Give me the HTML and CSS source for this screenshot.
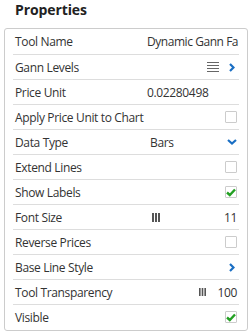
FILE: index.html
```html
<!DOCTYPE html>
<html lang="en">
<head>
    <meta charset="UTF-8">
    <meta name="viewport" content="width=device-width, initial-scale=1.0">
    <title>Properties</title>
    <link rel="stylesheet" href="styles.css">
</head>
<body>

<h1 class="title">Properties</h1>

<div class="panel">
    <!-- Tool Name -->
    <div class="row first">
        <span class="name">Tool Name</span>
        <span class="value long">Dynamic Gann Fa</span>
    </div>

    <div class="row">
        <span class="name">Gann Levels</span>
        <span class="value end">
            <svg class="list-icon" width="12" height="10" viewBox="0 0 12 10">
                <rect x="0" y="0" width="12" height="1" fill="#666"/>
                <rect x="0" y="3" width="12" height="1" fill="#666"/>
                <rect x="0" y="6" width="12" height="1" fill="#666"/>
                <rect x="0" y="9" width="12" height="1" fill="#666"/>
            </svg>
            <svg class="chev-right" width="6" height="9" viewBox="0 0 6 9">
                <path d="M1 1 L4.5 4.5 L1 8" fill="none" stroke="#1a6fc4" stroke-width="2.2"/>
            </svg>
        </span>
    </div>

    <div class="row">
        <span class="name">Price Unit</span>
        <span class="value">0.02280498</span>
    </div>

    <div class="row">
        <span class="name">Apply Price Unit to Chart</span>
        <span class="value end"><span class="check"></span></span>
    </div>

    <div class="row">
        <span class="name">Data Type</span>
        <span class="value split">
            <span class="select-text">Bars</span>
            <svg class="chev-down" width="10" height="6" viewBox="0 0 10 6">
                <path d="M1 1 L5 4.5 L9 1" fill="none" stroke="#1a6fc4" stroke-width="2.2"/>
            </svg>
        </span>
    </div>

    <div class="row">
        <span class="name">Extend Lines</span>
        <span class="value end"><span class="check"></span></span>
    </div>

    <div class="row">
        <span class="name">Show Labels</span>
        <span class="value end">
            <span class="check">
                <svg width="10" height="9" viewBox="0 0 10 9">
                    <path d="M1 4.5 L3.8 7 L9 1.5" fill="none" stroke="#23a023" stroke-width="2.4"/>
                </svg>
            </span>
        </span>
    </div>

    <div class="row">
        <span class="name">Font Size</span>
        <span class="value split">
            <svg class="bars-icon wide" width="8" height="9" viewBox="0 0 8 9">
                <rect x="0" y="0" width="2" height="9" fill="#555"/>
                <rect x="3" y="0" width="2" height="9" fill="#555"/>
                <rect x="6" y="0" width="2" height="9" fill="#555"/>
            </svg>
            <span class="num">11</span>
        </span>
    </div>

    <div class="row">
        <span class="name">Reverse Prices</span>
        <span class="value end"><span class="check"></span></span>
    </div>

    <div class="row">
        <span class="name">Base Line Style</span>
        <span class="value end">
            <svg class="chev-right" width="6" height="9" viewBox="0 0 6 9">
                <path d="M1 1 L4.5 4.5 L1 8" fill="none" stroke="#1a6fc4" stroke-width="2.2"/>
            </svg>
        </span>
    </div>

    <div class="row">
        <span class="name">Tool Transparency</span>
        <span class="value end">
            <svg class="bars-icon" width="7" height="8" viewBox="0 0 7 8">
                <rect x="0" y="0" width="1.6" height="8" fill="#555"/>
                <rect x="2.7" y="0" width="1.6" height="8" fill="#555"/>
                <rect x="5.4" y="0" width="1.6" height="8" fill="#555"/>
            </svg>
            <span class="num gap">100</span>
        </span>
    </div>

    <div class="row last">
        <span class="name">Visible</span>
        <span class="value end">
            <span class="check">
                <svg width="10" height="9" viewBox="0 0 10 9">
                    <path d="M1 4.5 L3.8 7 L9 1.5" fill="none" stroke="#23a023" stroke-width="2.4"/>
                </svg>
            </span>
        </span>
    </div>
</div>

</body>
</html>
```

FILE: styles.css
```css
body {
    margin: 0;
    font-family: "Open Sans", Arial, sans-serif;
    color: #333;
    background: #fff;
}
.title {
    margin: 0;
    padding: 1px 0 0 15px;
    height: 27px;
    font-size: 14px;
    font-weight: bold;
    line-height: 18px;
    letter-spacing: -0.1px;
    color: #222;
}
.panel {
    margin: 0 4px;
    border: 1px solid #ccc;
    border-radius: 3px;
    padding: 0 8px;
    height: 301px;
}
.row {
    display: flex;
    align-items: center;
    height: 24px;
    border-bottom: 1px solid #ddd;
    padding: 0 2px 0 2px;
    font-size: 12px;
    letter-spacing: -0.35px;
    white-space: nowrap;
}
.row.first {
    height: 25px;
}
.row.last {
    border-bottom: none;
}
.name {
    width: 132px;
    flex: none;
}
.value {
    flex: 1;
    display: flex;
    align-items: center;
    min-width: 0;
}
.value.long {
    margin-right: -3px;
    letter-spacing: -0.45px;
}
.value.end {
    justify-content: flex-end;
}
.value.split {
    justify-content: space-between;
}
.select-text {
    margin-left: 3px;
}
.list-icon {
    margin-right: 10px;
}
.chev-right {
    margin-right: 2px;
}
.check {
    width: 10px;
    height: 10px;
    border: 1px solid #ccc;
    border-radius: 1px;
    background: #fff;
    display: flex;
    align-items: center;
    justify-content: center;
}
.bars-icon.wide {
    margin-left: 5px;
}
.num.gap {
    margin-left: 11px;
}
```
